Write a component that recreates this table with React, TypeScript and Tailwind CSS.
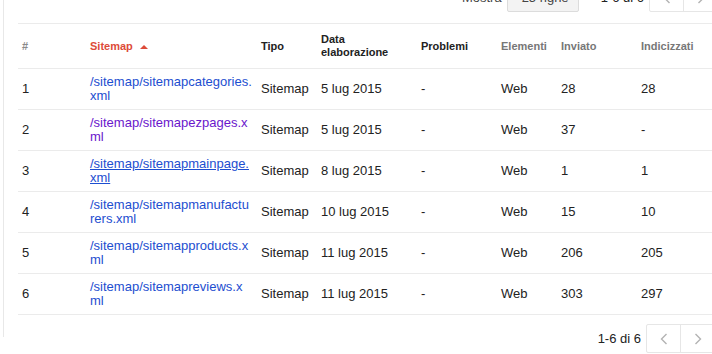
const rows = [
  { n: 1, path: '/sitemap/sitemapcategories.xml', date: '5 lug 2015', sent: '28', indexed: '28', link: 'blue' },
  { n: 2, path: '/sitemap/sitemapezpages.xml', date: '5 lug 2015', sent: '37', indexed: '-', link: 'visited' },
  { n: 3, path: '/sitemap/sitemapmainpage.xml', date: '8 lug 2015', sent: '1', indexed: '1', link: 'hover' },
  { n: 4, path: '/sitemap/sitemapmanufacturers.xml', date: '10 lug 2015', sent: '15', indexed: '10', link: 'blue' },
  { n: 5, path: '/sitemap/sitemapproducts.xml', date: '11 lug 2015', sent: '206', indexed: '205', link: 'blue' },
  { n: 6, path: '/sitemap/sitemapreviews.xml', date: '11 lug 2015', sent: '303', indexed: '297', link: 'blue' },
];

function Chevron({ dir }: { dir: 'left' | 'right' }) {
  return (
    <svg width="8" height="12" viewBox="0 0 8 12" className="block">
      <polyline
        points={dir === 'left' ? '6.5,1 1.5,6 6.5,11' : '1.5,1 6.5,6 1.5,11'}
        fill="none"
        stroke="#b3b3b3"
        strokeWidth="1.4"
      />
    </svg>
  );
}

function Pager() {
  return (
    <div className="flex items-center">
      <span className="text-[13px] text-[#222] mr-[5px]">1-6 di 6</span>
      <div className="flex h-[29px] border border-[#e6e6e6] rounded-[2px]">
        <button className="w-[34px] flex items-center justify-center border-r border-[#e6e6e6]">
          <Chevron dir="left" />
        </button>
        <button className="w-[34px] flex items-center justify-center">
          <Chevron dir="right" />
        </button>
      </div>
    </div>
  );
}

const linkClass: Record<string, string> = {
  blue: 'text-[#1d4ed0]',
  visited: 'text-[#6a16cc]',
  hover: 'text-[#1d4ed0] underline',
};

export default function App() {
  return (
    <div
      className="w-[712px] h-[354px] overflow-hidden bg-white"
      style={{ fontFamily: '"Liberation Sans", Arial, sans-serif' }}
    >
      <div className="ml-[3px] border-l border-[#e8e8e8] h-full pl-[14px] w-[716px]">
        <div className="flex items-center justify-end h-[29px] -mt-[17px] mb-[11px]">
          <span className="text-[13px] text-[#444] mr-[5px]">Mostra</span>
          <div className="w-[72px] h-[29px] rounded-[2px] border border-[#dcdcdc] bg-[#f3f3f3] flex items-center pl-[14px] text-[13px] text-[#444] mr-[22px]">
            25 righe
          </div>
          <Pager />
        </div>

        <table className="table-fixed border-collapse w-[694px] border-t border-[#ebebeb]">
          <colgroup>
            <col className="w-[68px]" />
            <col className="w-[171px]" />
            <col className="w-[60px]" />
            <col className="w-[100px]" />
            <col className="w-[80px]" />
            <col className="w-[60px]" />
            <col className="w-[80px]" />
            <col className="w-[75px]" />
          </colgroup>
          <thead>
            <tr className="h-[45px] border-b border-[#ebebeb] text-[11px] font-bold leading-[13px] text-left">
              <th className="pl-[4px] font-bold text-[#8a8a8a]">#</th>
              <th className="pl-[4px] font-bold text-[#dd4b39]">
                <span className="inline-flex items-center">
                  Sitemap
                  <svg width="8" height="5" viewBox="0 0 8 5" className="ml-[7px]">
                    <polygon points="0,5 4,1 8,5" fill="#dd4b39" />
                  </svg>
                </span>
              </th>
              <th className="pl-[4px] font-bold text-[#222]">Tipo</th>
              <th className="pl-[4px] font-bold text-[#222]">
                Data
                <br />
                elaborazione
              </th>
              <th className="pl-[4px] font-bold text-[#222]">Problemi</th>
              <th className="pl-[4px] font-bold text-[#777]">Elementi</th>
              <th className="pl-[4px] font-bold text-[#777]">Inviato</th>
              <th className="pl-[4px] font-bold text-[#777]">Indicizzati</th>
            </tr>
          </thead>
          <tbody className="text-[13px] text-[#222]">
            {rows.map((r) => (
              <tr key={r.n} className="h-[41px] border-b border-[#ebebeb]">
                <td className="pl-[4px]">{r.n}</td>
                <td className="pl-[4px]">
                  <div className={`w-[162px] break-all leading-[14px] ${linkClass[r.link]}`}>
                    {r.path}
                  </div>
                </td>
                <td className="pl-[4px]">Sitemap</td>
                <td className="pl-[4px]">{r.date}</td>
                <td className="pl-[4px]">-</td>
                <td className="pl-[4px]">Web</td>
                <td className="pl-[4px]">{r.sent}</td>
                <td className="pl-[4px]">{r.indexed}</td>
              </tr>
            ))}
          </tbody>
        </table>

        <div className="flex justify-end mt-[9px] w-[698px]">
          <Pager />
        </div>
      </div>
    </div>
  );
}
